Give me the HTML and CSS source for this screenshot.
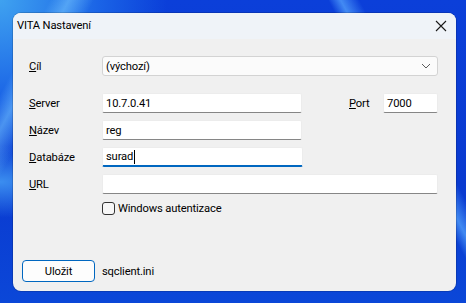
FILE: index.html
```html
<!DOCTYPE html>
<html lang="cs">
<head>
    <meta charset="UTF-8">
    <title>VITA Nastavení</title>
    <link rel="stylesheet" href="styles.css">
</head>
<body>
    <div class="window">
        <div class="titlebar">
            <span class="title">VITA Nastavení</span>
            <svg class="close" width="12" height="12" viewBox="0 0 12 12">
                <path d="M1 1 L11 11 M11 1 L1 11" stroke="#1a1a1a" stroke-width="1.1" fill="none"/>
            </svg>
        </div>
        <div class="content">
            <div class="row row-target">
                <label class="lbl"><u>C</u>íl</label>
                <div class="combo">
                    <span>(výchozí)</span>
                    <svg width="10" height="6" viewBox="0 0 10 6">
                        <path d="M1 1 L5 5 L9 1" stroke="#5c5c5c" stroke-width="1" fill="none"/>
                    </svg>
                </div>
            </div>
            <div class="row row-server">
                <label class="lbl"><u>S</u>erver</label>
                <div class="field w-mid">10.7.0.41</div>
                <label class="lbl lbl-port"><u>P</u>ort</label>
                <div class="field w-port">7000</div>
            </div>
            <div class="row row-tight">
                <label class="lbl"><u>N</u>ázev</label>
                <div class="field w-mid">reg</div>
            </div>
            <div class="row row-tight">
                <label class="lbl"><u>D</u>atabáze</label>
                <div class="field w-mid focused">surad<span class="caret"></span></div>
            </div>
            <div class="row row-tight">
                <label class="lbl"><u>U</u>RL</label>
                <div class="field w-full"></div>
            </div>
            <div class="row row-check">
                <span class="box"></span>
                <span>Windows autentizace</span>
            </div>
            <div class="footer">
                <button class="save">Uložit</button>
                <span>sqclient.ini</span>
            </div>
        </div>
    </div>
</body>
</html>
```

FILE: styles.css
```css
body {
    margin: 0;
    width: 466px;
    height: 303px;
    overflow: hidden;
    padding: 13px 0 0 13px;
    box-sizing: border-box;
    font-family: Roboto, "Noto Sans", sans-serif;
    font-size: 11.2px;
    letter-spacing: -0.15px;
    color: #000;
    background:
        linear-gradient(62deg, transparent 78%, rgba(90, 170, 255, 0.7) 80%, transparent 83%),
        linear-gradient(118deg, transparent 8%, rgba(120, 200, 255, 0.55) 11%, transparent 15%),
        radial-gradient(circle at 0 0, #3fa2f0 0, #1a63e6 18%, transparent 30%),
        radial-gradient(ellipse at 0 60%, #3b8ef0 0, transparent 14%),
        linear-gradient(180deg, #0b3fd9 0%, #0a3ad0 60%, #0b47d8 100%);
}
.window {
    width: 443px;
    height: 278px;
    background-color: #f0f0f0;
    border-radius: 8px;
    overflow: hidden;
    box-shadow: 0 0 0 1px rgba(0, 0, 0, 0.15);
    display: flex;
    flex-direction: column;
}
.titlebar {
    height: 26px;
    background-color: #eff3f8;
    display: flex;
    align-items: center;
    justify-content: space-between;
    padding: 0 9px 0 4px;
}
.title {
    margin-top: -1px;
}
.close {
    margin-top: -1px;
}
.content {
    flex: 1;
    padding: 17px 18px 0 16px;
    display: flex;
    flex-direction: column;
}
.row {
    display: flex;
    align-items: center;
    height: 20px;
}
.row-server {
    margin-top: 17px;
}
.row-tight {
    margin-top: 7px;
}
.lbl {
    width: 73px;
    flex-shrink: 0;
}
.lbl-port {
    width: 34px;
    margin-left: 47px;
}
.combo {
    flex: 1;
    height: 20px;
    box-sizing: border-box;
    background-color: #fbfbfb;
    border: 1px solid #d3d3d3;
    border-radius: 3px;
    display: flex;
    align-items: center;
    justify-content: space-between;
    padding: 0 6px 0 3px;
}
.field {
    height: 20px;
    box-sizing: border-box;
    background-color: #fff;
    border: 1px solid #ececec;
    border-bottom: 1px solid #868686;
    border-radius: 2px;
    padding: 0 3px;
    display: flex;
    align-items: center;
}
.w-mid {
    width: 200px;
}
.w-port {
    width: 55px;
}
.w-full {
    flex: 1;
}
.focused {
    border-bottom: 2px solid #0067c0;
    width: 201px;
}
.caret {
    width: 1px;
    height: 14px;
    background-color: #000;
    margin-left: 1px;
}
.row-check {
    margin-top: 7px;
    height: 14px;
    padding-left: 73px;
}
.box {
    width: 11px;
    height: 11px;
    border: 1px solid #333;
    border-radius: 3px;
    background-color: #f7f7f7;
    margin-right: 3px;
}
.footer {
    margin-top: auto;
    margin-bottom: 9px;
    margin-left: -7px;
    display: flex;
    align-items: center;
    gap: 7px;
}
.save {
    width: 73px;
    height: 22px;
    font-family: inherit;
    font-size: inherit;
    letter-spacing: inherit;
    background-color: #fdfdfd;
    border: 1px solid #0067c0;
    border-radius: 4px;
    padding: 0;
    color: #000;
}
```
